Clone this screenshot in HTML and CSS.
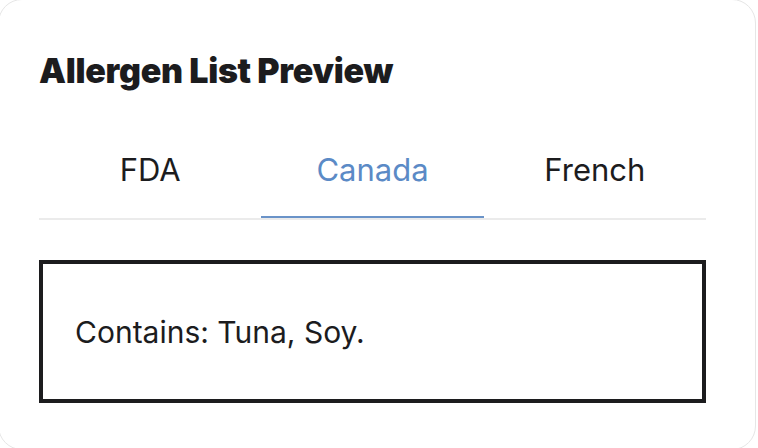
FILE: index.html
```html
<!DOCTYPE html>
<html lang="en">
<head>
<meta charset="utf-8">
<title>Allergen List Preview</title>
<link rel="stylesheet" href="styles.css">
</head>
<body>
<div class="card">
  <h2 class="title">Allergen List Preview</h2>
  <div class="tabs">
    <div class="tab">FDA</div>
    <div class="tab active">Canada</div>
    <div class="tab">French</div>
  </div>
  <div class="preview">
    <p class="preview-text">Contains: Tuna, Soy.</p>
  </div>
</div>
</body>
</html>
```

FILE: styles.css
```css
html, body {
  margin: 0;
  padding: 0;
  background: #ffffff;
  overflow: hidden;
}

body {
  width: 758px;
  height: 448px;
  font-family: Inter, "Noto Sans", "Liberation Sans", sans-serif;
  color: #1c1c1e;
}

.card {
  box-sizing: border-box;
  margin: -1px 0 0 -2px;
  width: 758px;
  height: 451px;
  border: 1px solid #e6e6e6;
  border-radius: 24px;
  background: #ffffff;
  padding: 51px 49px 0 40px;
}

.title {
  margin: 0;
  font-size: 34px;
  line-height: 40px;
  font-weight: 900;
  letter-spacing: -0.3px;
}

.tabs {
  display: flex;
  margin-top: 36px;
  border-bottom: 2px solid #ebebeb;
}

.tab {
  flex: 1;
  text-align: center;
  font-size: 31px;
  line-height: 38px;
  padding: 24px 0 27px;
  border-bottom: 2px solid transparent;
  color: #1c1c1e;
}

.tab.active {
  color: #5b8ac6;
  border-bottom-color: #6a93c8;
}

.preview {
  margin-top: 40px;
  border: 4px solid #1c1c1e;
  padding: 48px 32px 47px;
}

.preview-text {
  margin: 0;
  font-size: 30px;
  line-height: 40px;
}
```
